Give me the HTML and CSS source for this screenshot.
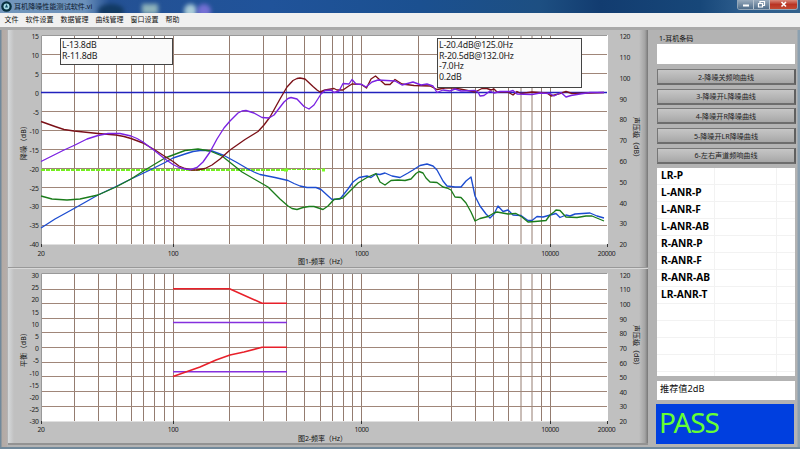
FILE: index.html
```
<!DOCTYPE html>
<html lang="zh-CN">
<head>
    <meta charset="UTF-8">
    <meta name="viewport" content="width=device-width, initial-scale=1.0">
    <title>耳机降噪性能测试软件.vi</title>
    <link rel="stylesheet" href="styles.css">
</head>
<body>
    <div class="window">
        <header class="titlebar">
            <svg class="titlebar__logo" width="11" height="11" viewBox="0 0 11 11">
                <circle cx="5.5" cy="5.5" r="5.3" fill="#07303f"/>
                <circle cx="5.5" cy="5.5" r="3" fill="#a9ddea"/>
                <path d="M5.5 3L7 6.5H4Z" fill="#155269"/>
            </svg>
            <span class="titlebar__title">耳机降噪性能测试软件.vi</span>
            <div class="titlebar__blobs"><i></i><i></i><i></i><i></i></div>
            <div class="titlebar__buttons">
                <button class="titlebar__button">
                    <svg width="13" height="9"><path d="M4 5.5H10" stroke="#fff" stroke-width="2"/></svg>
                </button>
                <button class="titlebar__button">
                    <svg width="13" height="9"><path d="M5 3V1.5H9.5V5.5H8M3.5 3.5H7.5V7H3.5Z" fill="none" stroke="#fff" stroke-width="1.2"/></svg>
                </button>
                <button class="titlebar__button titlebar__button--close">
                    <svg width="13" height="9"><path d="M4.5 2L9 6.5M9 2L4.5 6.5" stroke="#fff" stroke-width="1.6"/></svg>
                </button>
            </div>
        </header>
        <nav class="menu">
            <span>文件</span>
            <span>软件设置</span>
            <span>数据管理</span>
            <span>曲线管理</span>
            <span>窗口设置</span>
            <span>帮助</span>
        </nav>
        <main class="content">
            <div class="charts">
                <section class="chart chart--noise">
                    <svg width="640" height="238" viewBox="8 30 640 238">
                        <rect class="plot" x="41" y="35" width="567" height="209.5"/>
                        <g class="grid">
                            <path class="grid__x" d="M74.5 35V244M98.5 35V244M116.5 35V244M131.5 35V244M143.5 35V244M154.5 35V244M164.5 35V244M173.5 35V244M229.5 35V244M263.5 35V244M286.5 35V244M304.5 35V244M320.5 35V244M332.5 35V244M343.5 35V244M352.5 35V244M361.5 35V244M418.5 35V244M451.5 35V244M475.5 35V244M493.5 35V244M508.5 35V244M521 35V244M532 35V244M541.5 35V244M550.5 35V244"/>
                            <path d="M41 54.5H607M41 73.5H607M41 111.5H607M41 130.5H607M41 149.5H607M41 168.5H607M41 187.5H607M41 206.5H607M41 225.5H607"/>
                            <path class="frame" d="M607 35.5H41.5V244"/>
                        </g>
                        <path class="tick" d="M41.5 244V247M173.5 244V247M361.5 244V247M550.5 244V247M607.5 244V247"/>
                        <path class="zero" d="M41 92.5H607"/>
                        <path class="limit" d="M41 170H287"/>
                        <path class="limit limit--thin" d="M287 169.5H322"/>
                        <path class="limit-mark" d="M284 168.5h4v3h-4zM322 168.5h3v3h-3z"/>
                        <polyline class="line blue" points="41,228 55,219 75,208 98,195 116,186.5 131,179 150,170 165,162.5 173,158 185,154 193,151.5 200,150.5 206,150.5 212,151 224,155.5 236,162 248,169 254,172 260,174.5 275,177.5 288,180.5 294,183.5 300,186 307,187.5 316,187.5 321,189.5 327,195 332,199.5 340,199 348,189 353,182 359,177.5 367,176 371,177.5 376,174 380,174.5 385,173 392,176 400,177.5 408,173 413,170 420,165.5 427,164 433,166 437,170 443,181 447,186 455,187 461,187 466,181 471,177 475,196 480,206 486,214 490,218 494,214 498,206 503,211.5 508,210 513,215 521,215.5 528,220.5 532,220.5 537,216.5 543,217 556,213.5 560,217.5 566,215 570,216 575,214 590,213 597,216 604,218"/>
                        <polyline class="line green" points="41,196 52,199 67,200 80,199 98,195 116,187 131,179 145,170 155,164 165,158 173,155 185,150.5 198,149 210,151 222,156 232,164 242,172 255,179.5 268,187 280,199 288,206 292,208.5 297,209.5 303,207.5 309,206.5 314,206.5 323,209.5 328,206 334,199.5 343,198 350,191 358,183 367,177.5 376,173.5 380,182 385,185 391,180.5 398,180 405,180.5 411,179 416,173.5 419,171.5 423,173 426,178 430,182 437,182.5 443,187 447,188 451,190 455,197 461,197.5 466,203 471,212 475,221 480,218.5 488,216.5 494,213 497,212 508,214 516,213.5 522,217 528,222 535,221.5 546,220.5 550,215 554,212 556,210 560,210.5 566,217 577,217.5 586,216 592,216 604,221"/>
                        <polyline class="line maroon" points="41,121.5 48,124 55,126.5 64,129.5 74,131 98,133.5 116,135 124,136.5 131,138.5 143,143 155,150 165,156.5 173,161.5 179,166 185,168.5 191,170 197,170 205,168.5 212,165 220,159 230,150 245,139.5 258,131.5 264,125 270,117 280,99 287,87 293,80.5 297,78.5 300,78 305,79 313,86.5 317,90 320,92 325,90 334,88.5 337,90 343,90 348,86.5 352,84 361,84.3 366.5,88 371,79 375.5,76 385,84.5 390,84.5 395,79.5 402,84 414,85.5 430,86 437,89.5 445,88 453,88 460,89 475,92 482,88.5 487,88.5 491,90 494,89 497,92 508,92 513,95 517,91.5 521,93.5 532,92 547,93 551,96 560,93.5 566,91.5 572,93.5 590,93 604,92.5"/>
                        <polyline class="line purple" points="41,161.5 52,156 63,150.5 75,145 87,139 98,135.5 108,133.5 120,133.5 131,136 137,138.5 143,142 155,151 165,159 173,164.5 179,167.5 185,169 191,169.5 197,167.5 203,162 210,152 217,139 224,128 230,121 238,113 242,111 246,110.5 254,113 262,117.5 269,118 274,115 284,102 288,98.5 291,97.5 297,99 304,106.5 309,109 314,105 321,94 325,90.5 331,90 334,92.5 339,91 343,83.5 349,84 352,79.5 356,84 362,84.5 366,87 372,82 378,80 395,81 402,85 413,82 421,85 427,84 433,86 437,92.5 443,90 450,91 455,89 461,91 475,90.5 478,92 480,96 484,95.5 490,91 494,93 500,91.5 510,91.5 513,90.5 517,94 532,94.5 540,93 550,93.5 554,96 561,92.5 566,97 571,95.5 580,94 590,92.5 604,92.5"/>
                        <g class="labels labels--left">
                            <text x="38.5" y="39">15</text>
                            <text x="38.5" y="58">10</text>
                            <text x="38.5" y="77">5</text>
                            <text x="38.5" y="95.5">0</text>
                            <text x="38.5" y="114.5">-5</text>
                            <text x="38.5" y="133.5">-10</text>
                            <text x="38.5" y="152.5">-15</text>
                            <text x="38.5" y="171.5">-20</text>
                            <text x="38.5" y="190.5">-25</text>
                            <text x="38.5" y="209">-30</text>
                            <text x="38.5" y="228">-35</text>
                            <text x="38.5" y="247">-40</text>
                        </g>
                        <g class="labels">
                            <text x="619.5" y="39">120</text>
                            <text x="619.5" y="60">110</text>
                            <text x="619.5" y="80.5">100</text>
                            <text x="619.5" y="101.5">90</text>
                            <text x="619.5" y="122">80</text>
                            <text x="619.5" y="143">70</text>
                            <text x="619.5" y="164">60</text>
                            <text x="619.5" y="184.5">50</text>
                            <text x="619.5" y="205.5">40</text>
                            <text x="619.5" y="226">30</text>
                            <text x="619.5" y="247">20</text>
                        </g>
                        <g class="labels labels--bottom">
                            <text x="41" y="255.5">20</text>
                            <text x="173" y="255.5">100</text>
                            <text x="361.5" y="255.5">1000</text>
                            <text x="550" y="255.5">10000</text>
                            <text x="606.5" y="255.5">20000</text>
                            <text class="axis" x="322.5" y="264" textLength="49">图1-频率（Hz）</text>
                            <text class="axis" transform="translate(26 141) rotate(-90)" textLength="38">降噪（dB）</text>
                            <text class="axis" transform="translate(634 139) rotate(90)" textLength="44">声压级（dB）</text>
                        </g>
                    </svg>
                    <div class="readout readout--left">L-13.8dB<br>R-11.8dB</div>
                    <div class="readout readout--right">L-20.4dB@125.0Hz<br>R-20.5dB@132.0Hz<br>-7.0Hz<br>0.2dB</div>
                </section>
                <section class="chart chart--balance">
                    <svg width="640" height="175" viewBox="8 269 640 175">
                        <rect class="plot" x="41" y="273.5" width="567" height="148"/>
                        <g class="grid">
                            <path class="grid__x" d="M74.5 274V421M98.5 274V421M116.5 274V421M131.5 274V421M143.5 274V421M154.5 274V421M164.5 274V421M173.5 274V421M229.5 274V421M263.5 274V421M286.5 274V421M304.5 274V421M320.5 274V421M332.5 274V421M343.5 274V421M352.5 274V421M361.5 274V421M418.5 274V421M451.5 274V421M475.5 274V421M493.5 274V421M508.5 274V421M521 274V421M532 274V421M541.5 274V421M550.5 274V421"/>
                            <path d="M41 289.5H607M41 303.5H607M41 318.5H607M41 332.5H607M41 347.5H607M41 362.5H607M41 376.5H607M41 391.5H607M41 406.5H607"/>
                            <path class="frame" d="M607 273.5H41.5V421"/>
                        </g>
                        <path class="tick" d="M41.5 421V424M173.5 421V424M361.5 421V424M550.5 421V424M607.5 421V424"/>
                        <path class="bound" d="M173 322.5H287M173 371.8H287"/>
                        <polyline class="line red" points="173,288.8 229.5,288.8 262,303.3 287,303.3"/>
                        <polyline class="line red" points="173,376.5 200,367 216,360 230,355 244,352 262,347.3 287,347.3"/>
                        <g class="labels labels--left">
                            <text x="38.5" y="277.5">30</text>
                            <text x="38.5" y="290">25</text>
                            <text x="38.5" y="302">20</text>
                            <text x="38.5" y="314.5">15</text>
                            <text x="38.5" y="326.5">10</text>
                            <text x="38.5" y="338.5">5</text>
                            <text x="38.5" y="351">0</text>
                            <text x="38.5" y="363">-5</text>
                            <text x="38.5" y="375.5">-10</text>
                            <text x="38.5" y="387.5">-15</text>
                            <text x="38.5" y="399.5">-20</text>
                            <text x="38.5" y="411.5">-25</text>
                            <text x="38.5" y="424">-30</text>
                        </g>
                        <g class="labels">
                            <text x="619.5" y="277.5">120</text>
                            <text x="619.5" y="292">110</text>
                            <text x="619.5" y="307">100</text>
                            <text x="619.5" y="321.5">90</text>
                            <text x="619.5" y="336">80</text>
                            <text x="619.5" y="350.5">70</text>
                            <text x="619.5" y="365.5">60</text>
                            <text x="619.5" y="380">50</text>
                            <text x="619.5" y="394.5">40</text>
                            <text x="619.5" y="409">30</text>
                            <text x="619.5" y="424">20</text>
                        </g>
                        <g class="labels labels--bottom">
                            <text x="41" y="432">20</text>
                            <text x="173" y="432">100</text>
                            <text x="361.5" y="432">1000</text>
                            <text x="550" y="432">10000</text>
                            <text x="606.5" y="432">20000</text>
                            <text class="axis" x="322.5" y="440.5" textLength="49">图2-频率（Hz）</text>
                            <text class="axis" transform="translate(26 348) rotate(-90)" textLength="38">平衡（dB）</text>
                            <text class="axis" transform="translate(634 347) rotate(90)" textLength="44">声压级（dB）</text>
                        </g>
                    </svg>
                </section>
            </div>
            <aside class="side">
                <label class="side__label">1-耳机条码</label>
                <div class="side__input"></div>
                <div class="side__buttons">
                    <button class="side__button">2-降噪关频响曲线</button>
                    <button class="side__button">3-降噪开L降噪曲线</button>
                    <button class="side__button">4-降噪开R降噪曲线</button>
                    <button class="side__button">5-降噪开LR降噪曲线</button>
                    <button class="side__button">6-左右声道频响曲线</button>
                </div>
                <ul class="results">
                    <li>LR-P</li>
                    <li>L-ANR-P</li>
                    <li>L-ANR-F</li>
                    <li>L-ANR-AB</li>
                    <li>R-ANR-P</li>
                    <li>R-ANR-F</li>
                    <li>R-ANR-AB</li>
                    <li>LR-ANR-T</li>
                    <li></li>
                    <li></li>
                    <li></li>
                    <li></li>
                </ul>
                <div class="hint">推荐值2dB</div>
                <div class="verdict">PASS</div>
            </aside>
        </main>
    </div>
</body>
</html>
```
FILE: styles.css
```
* { box-sizing: border-box; }
body { margin: 0; overflow: hidden; font-family: "Noto Sans", "Noto Sans CJK SC", sans-serif; color: #111; }
button { padding: 0; border: 0; font-family: inherit; }

.window { display: flex; flex-direction: column; width: 800px; height: 449px; background: #b3b3b3; border-bottom: 2px solid #71899b; }

.titlebar { position: relative; display: flex; align-items: flex-start; height: 13px; flex: none; overflow: hidden; background: linear-gradient(90deg, #7397bd 0, #6b90ba 85px, #245194 110px, #20539a 270px, #1b5090 420px, #1d4f82 540px, #123c70 600px, #174779 700px, #2c5c8c 740px, #33618b 800px); }
.titlebar__logo { margin: 1px 2px 0 1px; flex: none; }
.titlebar__title { font-size: 7.1px; line-height: 13px; white-space: nowrap; color: #0c1a30; }
.titlebar__blobs i { position: absolute; top: 4px; width: 26px; height: 14px; border-radius: 50%; background: #123a63; filter: blur(2px); left: 98px; }
.titlebar__blobs i:nth-child(2) { left: 142px; width: 16px; height: 10px; border-radius: 0; background: #8fb3ba; }
.titlebar__blobs i:nth-child(3) { left: 184px; width: 13px; background: #a9cbd8; }
.titlebar__blobs i:nth-child(4) { left: 197px; width: 14px; background: #7470d4; }
.titlebar__buttons { display: flex; margin: 0 2px 0 auto; border: 1px solid #93a6b8; border-top: 0; border-radius: 0 0 3px 3px; overflow: hidden; }
.titlebar__button { display: flex; justify-content: center; width: 16px; height: 9px; background: linear-gradient(#99abbd, #4f6d8a); border-right: 1px solid #b8c4cf; }
.titlebar__button--close { width: 27px; background: linear-gradient(#d98a7c, #b93424 50%, #c14a33); border-right: 0; }

.menu { display: flex; gap: 7px; height: 14px; flex: none; padding-left: 4.5px; background: #f0f0f0; font-size: 7px; line-height: 13px; }

.content { display: grid; grid-template-columns: 640px 141px; column-gap: 8px; flex: 1; min-height: 0; padding-left: 8px; border-top: 3px solid #a9a9a9; background: linear-gradient(90deg, #71899b 0, #71899b 1px, #b3aaa4 2px, #b5adaa 7px, transparent 7px, transparent 797px, #8ba0b0 798px); }
.charts { width: 640px; }
.chart { position: relative; background: linear-gradient(90deg, #d6d9db 0, #c0c0c0 6px, #c0c0c0 631px, #a4a4a4 637px, #777 640px); }
.chart svg { display: block; }
.chart--noise { height: 238px; border-bottom: 1px solid #999; }
.chart--balance { height: 177px; border-top: 1px solid #d8d8d8; border-bottom: 2px solid #929292; }

.plot { fill: #fff; }
.grid { fill: none; stroke: #a08679; }
.grid__x { stroke: #947c70; }
.frame { stroke: #999; }
.tick { stroke: #333; }
.zero { stroke: #2222bd; stroke-width: 1.4; }
.limit { stroke: #74ee20; stroke-width: 2.2; stroke-dasharray: 4 1; }
.limit--thin { stroke-width: 1.2; }
.limit-mark { fill: #77ff22; }
.line { fill: none; stroke-width: 1.35; stroke-linejoin: round; }
.blue { stroke: #1c4cd0; }
.green { stroke: #1b7c1b; }
.maroon { stroke: #7b1118; }
.purple { stroke: #7a22e2; }
.red { stroke: #e8202a; stroke-width: 1.6; }
.bound { stroke: #8530dd; stroke-width: 1.6; }
.labels { font-size: 6.8px; fill: #222; letter-spacing: -0.35px; }
.labels--left { text-anchor: end; }
.labels--bottom { text-anchor: middle; }
.axis { font-size: 7px; fill: #111; letter-spacing: 0; }

.readout { position: absolute; background: #fafafa; border: 1px solid #444; padding-left: 1px; font-size: 8.8px; line-height: 10.7px; letter-spacing: -0.2px; color: #222; }
.readout--left { left: 52px; top: 8px; width: 113px; height: 27px; padding-top: 1px; }
.readout--right { left: 429px; top: 8px; width: 145px; height: 50px; padding-top: 1px; }

.side { display: flex; flex-direction: column; width: 141px; padding-top: 4px; }
.side__label { height: 10px; padding-left: 3px; font-size: 7px; line-height: 9px; }
.side__input { width: 138px; height: 20px; margin-left: 1px; background: #fff; }
.side__buttons { display: flex; flex-direction: column; gap: 3.7px; margin-top: 5px; }
.side__button { width: 139px; height: 16px; margin-left: 1px; border: 1px solid #777; border-right: 2px solid #606060; border-bottom: 2px solid #6d6d6d; background: linear-gradient(#c6c6c6, #b4b4b4 60%, #a6a6a6); font-size: 7.1px; line-height: 12px; color: #222; }
.results { width: 138px; height: 208px; margin: 4px 0 0 1px; padding: 0; overflow: hidden; list-style: none; background: linear-gradient(90deg, transparent 57px, #f2f2f2 57px, #f2f2f2 58px, transparent 58px, transparent 119px, #f2f2f2 119px, #f2f2f2 120px, transparent 120px) #fff; font-size: 10.2px; font-weight: bold; line-height: 15px; }
.results li { height: 17px; padding-left: 4px; border-bottom: 1px solid #f2f2f2; color: #000; }
.hint { width: 138px; height: 19px; margin: 5px 0 0 1px; padding-left: 3px; background: #fff; font-size: 9.2px; line-height: 16px; }
.verdict { width: 138px; height: 40px; margin-top: 4px; padding-left: 3px; background: #003fdf; color: #66ff33; font-size: 28px; line-height: 37px; letter-spacing: -1.1px; }
```
